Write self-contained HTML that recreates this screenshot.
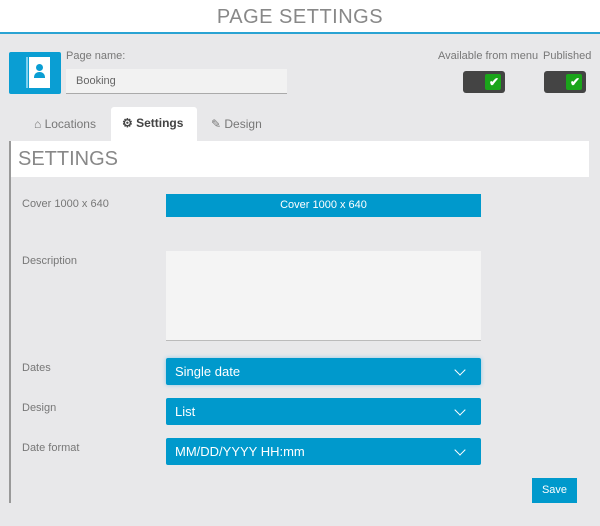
<!DOCTYPE html>
<html><head><style>
*{box-sizing:border-box;margin:0;padding:0}
body{width:600px;height:526px;background:#e8e8ea;font-family:"Liberation Sans",sans-serif;position:relative;overflow:hidden;color:#666}
.a{position:absolute}
.hdr{left:0;top:0;width:600px;height:34px;background:#fff;border-bottom:2px solid #2aa3d3;text-align:center;font-size:20px;line-height:34px;color:#888;font-weight:300;letter-spacing:.5px}
.lbl{font-size:11px;color:#777}
.sel{background:#0099cc;color:#fff;font-size:13px;line-height:27px;padding-left:9px;border-radius:2px;width:315px;height:27px;left:166px}
.chev{position:absolute;right:17px;top:8px;width:8px;height:8px;border-right:1.6px solid #fff;border-bottom:1.6px solid #fff;transform:rotate(45deg)}
.tog{width:42px;height:22px;background:#444;border-radius:3px}
.tog i{position:absolute;right:4px;top:3px;width:16px;height:16px;background:#1aa51a;border-radius:2px}
.tab{font-size:12px;color:#777}
</style></head><body>
<div class="a hdr">PAGE SETTINGS</div>
<div class="a" style="left:9px;top:52px;width:52px;height:42px;background:#0a9ed3;border-radius:2px"></div>
<div class="a" style="left:29px;top:57px;width:21px;height:31px;background:#fff"></div>
<div class="a" style="left:26px;top:57px;width:2px;height:31px;background:#7fd0ee"></div>
<div class="a" style="left:36px;top:64px;width:7px;height:7px;border-radius:50%;background:#0a9ed3"></div>
<div class="a" style="left:34px;top:72px;width:11px;height:6px;border-radius:5px 5px 0 0;background:#0a9ed3"></div>
<div class="a lbl" style="left:66px;top:50px">Page name:</div>
<div class="a" style="left:66px;top:69px;width:221px;height:25px;background:#f2f2f2;border-bottom:1px solid #aaa;font-size:11px;line-height:24px;padding-left:10px;color:#666">Booking</div>
<div class="a lbl" style="left:438px;top:50px">Available from menu</div>
<div class="a lbl" style="left:543px;top:50px">Published</div>
<div class="a tog" style="left:463px;top:71px"><i></i><span class="a" style="left:26px;top:4px;color:#fff;font-size:12px;font-weight:bold">✔</span></div>
<div class="a tog" style="left:544px;top:71px"><i></i><span class="a" style="left:26px;top:4px;color:#fff;font-size:12px;font-weight:bold">✔</span></div>
<div class="a tab" style="left:34px;top:117px">⌂ Locations</div>
<div class="a" style="left:111px;top:107px;width:86px;height:35px;background:#fff;border-radius:3px 3px 0 0"></div>
<div class="a tab" style="left:122px;top:116px;font-weight:bold;color:#444">⚙ Settings</div>
<div class="a tab" style="left:211px;top:117px">✎ Design</div>
<div class="a" style="left:9px;top:141px;width:580px;height:36px;background:#fff"></div>
<div class="a" style="left:18px;top:148px;font-size:20px;color:#888;font-weight:300">SETTINGS</div>
<div class="a" style="left:9px;top:141px;width:2px;height:362px;background:#999"></div>
<div class="a lbl" style="left:22px;top:198px">Cover 1000 x 640</div>
<div class="a" style="left:166px;top:194px;width:315px;height:23px;background:#0099cc;color:#fff;font-size:11px;text-align:center;line-height:23px">Cover 1000 x 640</div>
<div class="a lbl" style="left:22px;top:255px">Description</div>
<div class="a" style="left:166px;top:251px;width:315px;height:90px;background:#f4f4f4;border-bottom:1px solid #bbb"></div>
<div class="a lbl" style="left:22px;top:362px">Dates</div>
<div class="a sel" style="top:358px;box-shadow:0 0 4px #8cc9e6">Single date<span class="chev"></span></div>
<div class="a lbl" style="left:22px;top:402px">Design</div>
<div class="a sel" style="top:398px">List<span class="chev"></span></div>
<div class="a lbl" style="left:22px;top:442px">Date format</div>
<div class="a sel" style="top:438px">MM/DD/YYYY HH:mm<span class="chev"></span></div>
<div class="a" style="left:532px;top:478px;width:45px;height:25px;background:#0099cc;color:#fff;font-size:11px;text-align:center;line-height:25px">Save</div>
</body></html>
